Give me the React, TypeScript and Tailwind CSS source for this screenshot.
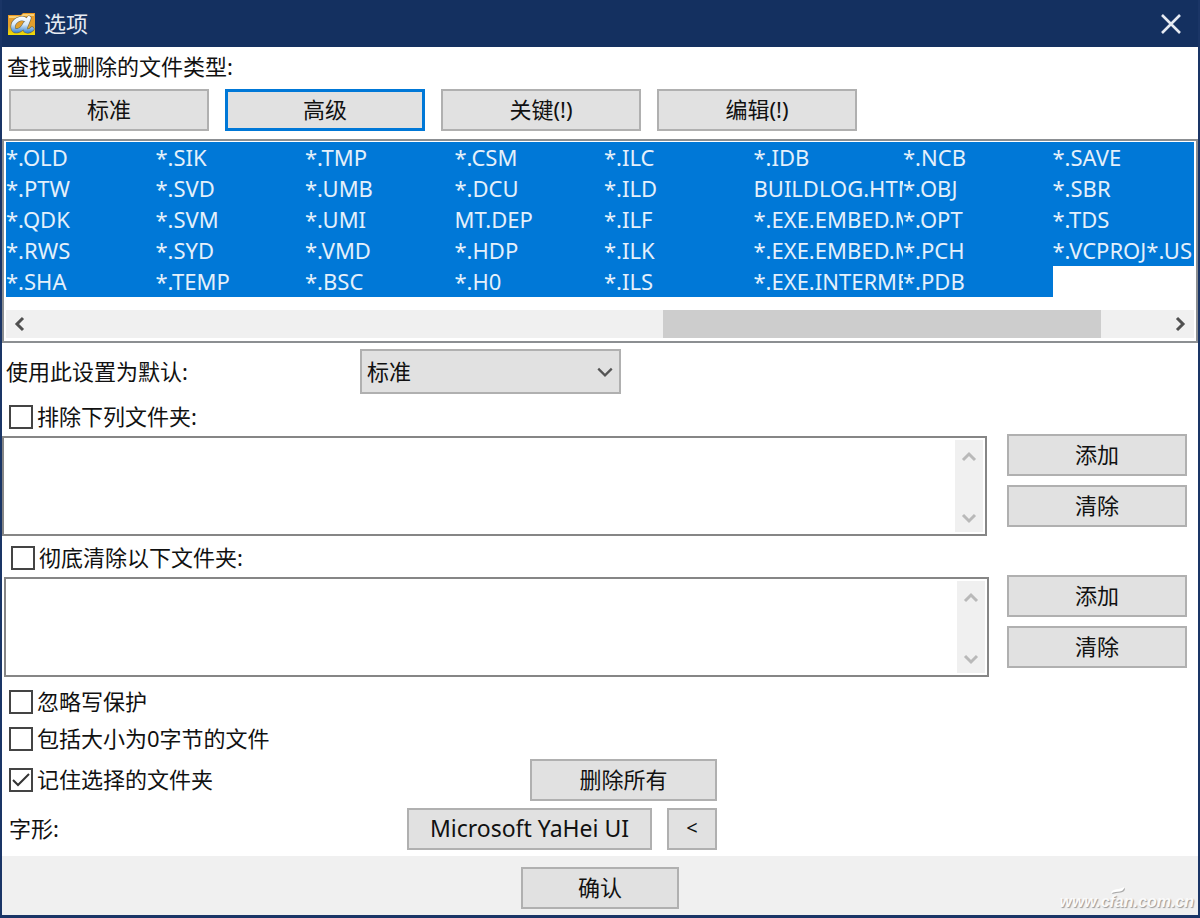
import { useState } from "react";
import type { ReactNode } from "react";

const FILE_TYPES = [
  "*.OLD", "*.PTW", "*.QDK", "*.RWS", "*.SHA",
  "*.SIK", "*.SVD", "*.SVM", "*.SYD", "*.TEMP",
  "*.TMP", "*.UMB", "*.UMI", "*.VMD", "*.BSC",
  "*.CSM", "*.DCU", "MT.DEP", "*.HDP", "*.H0",
  "*.ILC", "*.ILD", "*.ILF", "*.ILK", "*.ILS",
  "*.IDB", "BUILDLOG.HTM", "*.EXE.EMBED.MANIFEST", "*.EXE.EMBED.MANIFEST.RES", "*.EXE.INTERMEDIATE.MANIFEST",
  "*.NCB", "*.OBJ", "*.OPT", "*.PCH", "*.PDB",
  "*.SAVE", "*.SBR", "*.TDS", "*.VCPROJ*.US",
];

type Direction = "up" | "down" | "left" | "right";

const CHEVRONS: Record<Direction, string> = {
  up: "M2 11 8 5l6 6",
  down: "M2 5l6 6 6-6",
  left: "M11 2 5 8l6 6",
  right: "M5 2l6 6-6 6",
};

function Chevron({ dir, className }: { dir: Direction; className: string }) {
  return (
    <svg viewBox="0 0 16 16" className={className} fill="none" stroke="currentColor" aria-hidden="true">
      <path d={CHEVRONS[dir]} />
    </svg>
  );
}

function Button({ className, active, children }: { className: string; active?: boolean; children: ReactNode }) {
  const frame = active ? "border-[3px] border-[#0078d7]" : "border-2 border-[#b0b0b0]";
  return (
    <button type="button" className={`flex h-[42px] shrink-0 items-center justify-center bg-[#e1e1e1] pb-[2px] ${frame} ${className}`}>
      {children}
    </button>
  );
}

function Check({ label, initial = false, className = "" }: { label: string; initial?: boolean; className?: string }) {
  const [checked, setChecked] = useState(initial);
  return (
    <label className={`flex items-center gap-1 ${className}`}>
      <span className="relative flex size-6 shrink-0">
        <input
          type="checkbox"
          checked={checked}
          onChange={(e) => setChecked(e.target.checked)}
          className="size-6 appearance-none border-2 border-[#444] bg-white"
        />
        {checked && (
          <svg viewBox="0 0 24 24" className="pointer-events-none absolute inset-0" fill="none" stroke="#333" strokeWidth="2" aria-hidden="true">
            <path d="M4 12l5 5L20 6" />
          </svg>
        )}
      </span>
      <span className="pb-[2px]">{label}</span>
    </label>
  );
}

function FolderSection({ label, className }: { label: string; className: string }) {
  return (
    <section className={`flex pr-[11px] ${className}`}>
      <div className="min-w-0 flex-1">
        <Check label={label} className="h-[41px] pt-[2px] pl-[7px]" />
        <div className="flex h-[100px] border-2 border-[#868686] p-[2px]">
          <textarea aria-label={label} className="min-w-0 flex-1 resize-none bg-white outline-none" />
          <div className="flex w-7 flex-col items-center justify-between bg-[#f0f0f0] pt-[9px] pb-[6px] text-[#b9b9b9]">
            <button type="button" aria-label="向上滚动">
              <Chevron dir="up" className="size-4 stroke-[3]" />
            </button>
            <button type="button" aria-label="向下滚动">
              <Chevron dir="down" className="size-4 stroke-[3]" />
            </button>
          </div>
        </div>
      </div>
      <div className="flex flex-col gap-[9px] pt-[39px]">
        <Button className="w-[180px]">添加</Button>
        <Button className="w-[180px]">清除</Button>
      </div>
    </section>
  );
}

function AppIcon() {
  return (
    <svg viewBox="0 0 28 24" className="h-6 w-7" aria-hidden="true">
      <defs>
        <linearGradient id="folder" x1="0" y1="0" x2="0" y2="1">
          <stop offset="0" stopColor="#ee9a22" />
          <stop offset="0.6" stopColor="#e0a030" />
          <stop offset="1" stopColor="#f2e000" />
        </linearGradient>
        <linearGradient id="swirl" gradientUnits="userSpaceOnUse" x1="0" y1="4" x2="0" y2="21">
          <stop offset="0" stopColor="#ffffff" />
          <stop offset="0.5" stopColor="#d6e8f8" />
          <stop offset="1" stopColor="#2f7fd2" />
        </linearGradient>
      </defs>
      <path d="M0 3h13l2-2h12v22H0z" fill="url(#folder)" />
      <path d="M1 4h12l2-2h11v2H15l-2 2H1z" fill="#f9cf74" />
      <g fill="none" strokeLinecap="round">
        <path d="M18 8C13 4 5 9 5 15c0 6 8 5 12-3" stroke="#6b6a55" strokeWidth="5" />
        <path d="M21 6l-4 10c0 4 4 4 7 1" stroke="#6b6a55" strokeWidth="5" />
        <path d="M18 8C13 4 5 9 5 15c0 6 8 5 12-3" stroke="url(#swirl)" strokeWidth="3.8" />
        <path d="M21 6l-4 10c0 4 4 4 7 1" stroke="url(#swirl)" strokeWidth="3.8" />
      </g>
    </svg>
  );
}

export default function App() {
  const [preset, setPreset] = useState("标准");
  return (
    <div className="flex min-h-screen flex-col border-x-2 border-b-[3px] border-[#1a3566] bg-white font-['Noto_Sans','Noto_Sans_CJK_SC',sans-serif] text-[22px] leading-[30px] text-[#111]">
      <header className="flex h-[47px] items-center justify-between bg-[#143060] pr-[15px] pl-[6px] text-[#e6eaf2]">
        <div className="flex items-center gap-2">
          <AppIcon />
          <h1 className="pb-[2px]">选项</h1>
        </div>
        <button type="button" aria-label="关闭" className="flex size-6 items-center justify-center">
          <svg viewBox="0 0 20 20" className="size-5" fill="none" stroke="#e6eaf2" strokeWidth="2.6" aria-hidden="true">
            <path d="M1 1l18 18M19 1 1 19" />
          </svg>
        </button>
      </header>

      <main className="flex-1">
        <p className="h-[42px] px-[5px] pt-1">查找或删除的文件类型:</p>
        <div className="flex gap-4 px-[7px]">
          <Button className="w-[200px]">标准</Button>
          <Button className="w-[200px]" active>高级</Button>
          <Button className="w-[200px]">关键(!)</Button>
          <Button className="w-[200px]">编辑(!)</Button>
        </div>

        <div className="mt-2 border-2 border-[#8c8f92] px-[2px] pt-px pb-[3px]">
          <div className="overflow-hidden">
            <ul role="listbox" aria-label="文件类型" aria-multiselectable="true" className="-mr-2 grid grid-flow-col grid-cols-8 grid-rows-5 leading-[31px] text-[#e4f0fb]">
              {FILE_TYPES.map((type) => (
                <li key={type} role="option" aria-selected="true" className="h-[31px] overflow-hidden bg-[#0078d7] whitespace-nowrap">
                  {type}
                </li>
              ))}
            </ul>
          </div>
          <div className="mt-[13px] flex h-7 items-center justify-between bg-[#f0f0f0] text-[#505050]">
            <button type="button" aria-label="向左滚动" className="flex w-7 justify-center">
              <Chevron dir="left" className="size-4 stroke-[3]" />
            </button>
            <div className="flex h-full flex-1">
              <div className="w-[55.6%]" />
              <div className="w-[38.7%] bg-[#cdcdcd]" />
            </div>
            <button type="button" aria-label="向右滚动" className="flex w-7 justify-center">
              <Chevron dir="right" className="size-4 stroke-[3]" />
            </button>
          </div>
        </div>

        <div className="mt-[6px] flex items-center pl-1">
          <label htmlFor="preset" className="w-[354px] pb-[2px]">使用此设置为默认:</label>
          <div className="relative w-[261px]">
            <select
              id="preset"
              value={preset}
              onChange={(e) => setPreset(e.target.value)}
              className="block h-[45px] w-full appearance-none border-2 border-[#b0b0b0] bg-[#e1e1e1] px-[5px] pb-[2px]"
            >
              <option>标准</option>
              <option>高级</option>
              <option>关键(!)</option>
            </select>
            <Chevron dir="down" className="pointer-events-none absolute top-[14px] right-[7px] size-[18px] stroke-2 text-[#555]" />
          </div>
        </div>

        <FolderSection label="排除下列文件夹:" className="mt-px gap-5" />
        <FolderSection label="彻底清除以下文件夹:" className="gap-[18px] pl-[2px]" />

        <div className="px-[7px] py-[6px]">
          <Check label="忽略写保护" className="h-[37px]" />
          <Check label="包括大小为0字节的文件" className="h-[37px]" />
          <div className="mt-[2px] flex items-center">
            <Check label="记住选择的文件夹" initial className="w-[521px]" />
            <Button className="w-[187px]">删除所有</Button>
          </div>
          <div className="mt-[7px] flex items-center">
            <p className="w-[398px] pb-[2px]">字形:</p>
            <Button className="w-[245px] text-[23px]">Microsoft YaHei UI</Button>
            <Button className="ml-[15px] w-[50px]">
              <span className="text-xl">&lt;</span>
            </Button>
          </div>
        </div>
      </main>

      <footer className="relative flex h-[59px] items-center justify-center bg-[#f0f0f0] pt-[5px]">
        <Button className="w-[158px]">确认</Button>
        <div className="absolute right-1 bottom-0 font-['Liberation_Sans',sans-serif] text-base leading-[26px] font-bold text-[#fafafa] italic [text-shadow:1px_1px_1px_#999]">
          <svg viewBox="0 0 14 7" className="absolute -top-[2px] left-[52px] h-[7px] w-[14px] drop-shadow-[1px_1px_0_#aaa]" aria-hidden="true">
            <path d="M0 6C1 1 9 3 13 0c0 6-7 4-13 6z" fill="#fff" />
          </svg>
          www.cfan.com.cn
        </div>
      </footer>
    </div>
  );
}
